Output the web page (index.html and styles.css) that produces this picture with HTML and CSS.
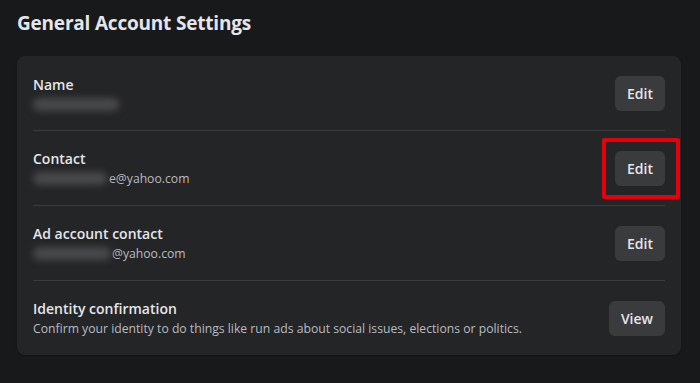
FILE: index.html
```html
<!DOCTYPE html>
<html lang="en">
<head>
<meta charset="utf-8">
<title>General Account Settings</title>
<link rel="stylesheet" href="styles.css">
</head>
<body>
<main class="page">
  <h1 class="title">General Account Settings</h1>
  <section class="card">
    <div class="row">
      <div class="info">
        <div class="label">Name</div>
        <div class="value"><span class="redact redact-name"></span></div>
      </div>
      <button class="btn">Edit</button>
    </div>
    <div class="row">
      <div class="info">
        <div class="label">Contact</div>
        <div class="value"><span class="redact redact-contact"></span>e@yahoo.com</div>
      </div>
      <div class="btn-wrap">
        <button class="btn">Edit</button>
        <span class="highlight"></span>
      </div>
    </div>
    <div class="row">
      <div class="info">
        <div class="label">Ad account contact</div>
        <div class="value"><span class="redact redact-ad"></span>@yahoo.com</div>
      </div>
      <button class="btn">Edit</button>
    </div>
    <div class="row">
      <div class="info">
        <div class="label">Identity confirmation</div>
        <div class="value">Confirm your identity to do things like run ads about social issues, elections or politics.</div>
      </div>
      <button class="btn">View</button>
    </div>
  </section>
</main>
</body>
</html>
```

FILE: styles.css
```css
* { box-sizing: border-box; }
html, body {
  margin: 0;
  background: #18191a;
  height: 100%;
}
body {
  font-family: "Open Sans", "Noto Sans", "Liberation Sans", sans-serif;
  color: #e4e6eb;
}
.page {
  padding: 11px 19px 0 17px;
}
.title {
  margin: 0 0 20px 0;
  font-size: 19px;
  line-height: 25px;
  font-weight: 700;
  letter-spacing: -0.2px;
  color: #e4e6eb;
}
.card {
  background: #242526;
  border-radius: 8px;
  padding: 0 16px;
  box-shadow: 0 1px 2px rgba(0,0,0,0.3);
}
.row {
  display: flex;
  align-items: center;
  justify-content: space-between;
  height: 75px;
  border-top: 1px solid #3a3b3d;
}
.row:first-child {
  border-top: none;
  height: 74px;
}
.info {
  display: flex;
  flex-direction: column;
}
.label {
  font-size: 14px;
  line-height: 19px;
  font-weight: 600;
  color: #e4e6eb;
  margin-bottom: 2px;
}
.value {
  font-size: 12.2px;
  line-height: 18px;
  color: #b8bbc0;
  display: flex;
  align-items: center;
}
.redact {
  display: inline-block;
  height: 13px;
  border-radius: 6px;
  background: #48494b;
  filter: blur(3.5px);
}
.redact-name { width: 86px; margin-top: 2px; }
.redact-contact { width: 74px; margin-right: 2px; }
.redact-ad { width: 78px; margin-right: 1px; }
.btn {
  font-family: inherit;
  font-size: 14px;
  font-weight: 600;
  color: #e4e6eb;
  background: #3a3b3c;
  border: none;
  border-radius: 6px;
  height: 35px;
  padding: 0 12px;
  cursor: pointer;
}
.btn-wrap {
  position: relative;
  display: flex;
}
.highlight {
  position: absolute;
  left: -13px;
  right: -15px;
  top: -13px;
  bottom: -13px;
  border: 4px solid #e5000e;
  border-radius: 2px;
  pointer-events: none;
}
```
